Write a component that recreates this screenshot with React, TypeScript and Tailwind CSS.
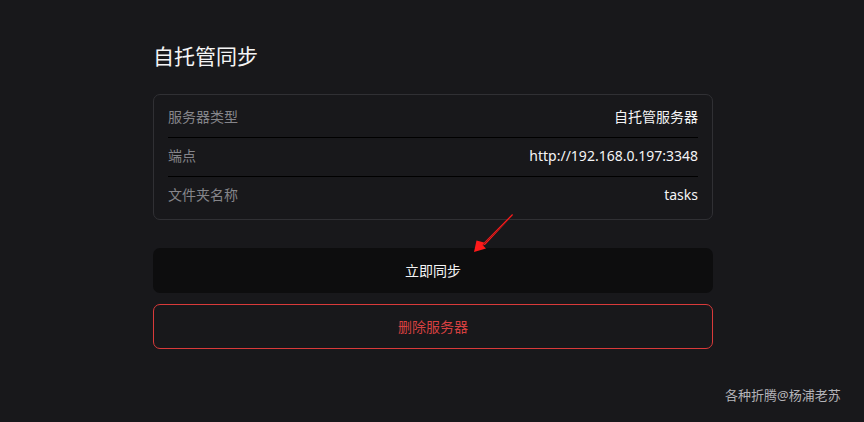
import React from "react";

const font = { fontFamily: '"Noto Sans", "Noto Sans CJK SC", sans-serif' };

function Row({ label, value, last }: { label: string; value: string; last?: boolean }) {
  return (
    <div
      className={`flex items-center justify-between pb-[3px] text-[14px] ${last ? "h-[38px]" : "h-[39px] border-b border-black"}`}
    >
      <span className="text-[#85858a]">{label}</span>
      <span className="text-[#f4f4f5]">{value}</span>
    </div>
  );
}

export default function App() {
  return (
    <div className="relative min-h-[422px] w-full bg-[#18181b] pl-[2px]" style={font}>
      <div className="mx-auto flex w-[560px] flex-col pt-[41px]">
        <h1 className="text-[21px] leading-[30px] text-[#f4f4f5]">自托管同步</h1>
        <div className="mt-[23px] rounded-[7px] border border-[#303034] px-[14px] py-[4px]">
          <Row label="服务器类型" value="自托管服务器" />
          <Row label="端点" value="http://192.168.0.197:3348" />
          <Row label="文件夹名称" value="tasks" last />
        </div>
        <button className="mt-[28px] h-[45px] rounded-[7px] bg-[#0d0d0e] pb-[1px] text-[14px] text-[#f4f4f5]">
          立即同步
        </button>
        <button className="mt-[11px] h-[45px] rounded-[7px] border border-[#d93a3a] pb-[1px] text-[14px] text-[#d64040]">
          删除服务器
        </button>
      </div>
      <svg className="absolute left-[470px] top-[212px]" width="48" height="44" viewBox="470 212 48 44">
        <polygon points="513,215 512.2,214 484,242.5 476.5,240.5 474,252 486,248.5 482.5,245" fill="#ff1a1a" />
        <polygon points="513,215 482,246 485.5,244.5" fill="#ff1a1a" />
      </svg>
      <div className="absolute left-[725px] top-[386px] text-[13px] text-[#b4b4b8]">各种折腾@杨浦老苏</div>
    </div>
  );
}
